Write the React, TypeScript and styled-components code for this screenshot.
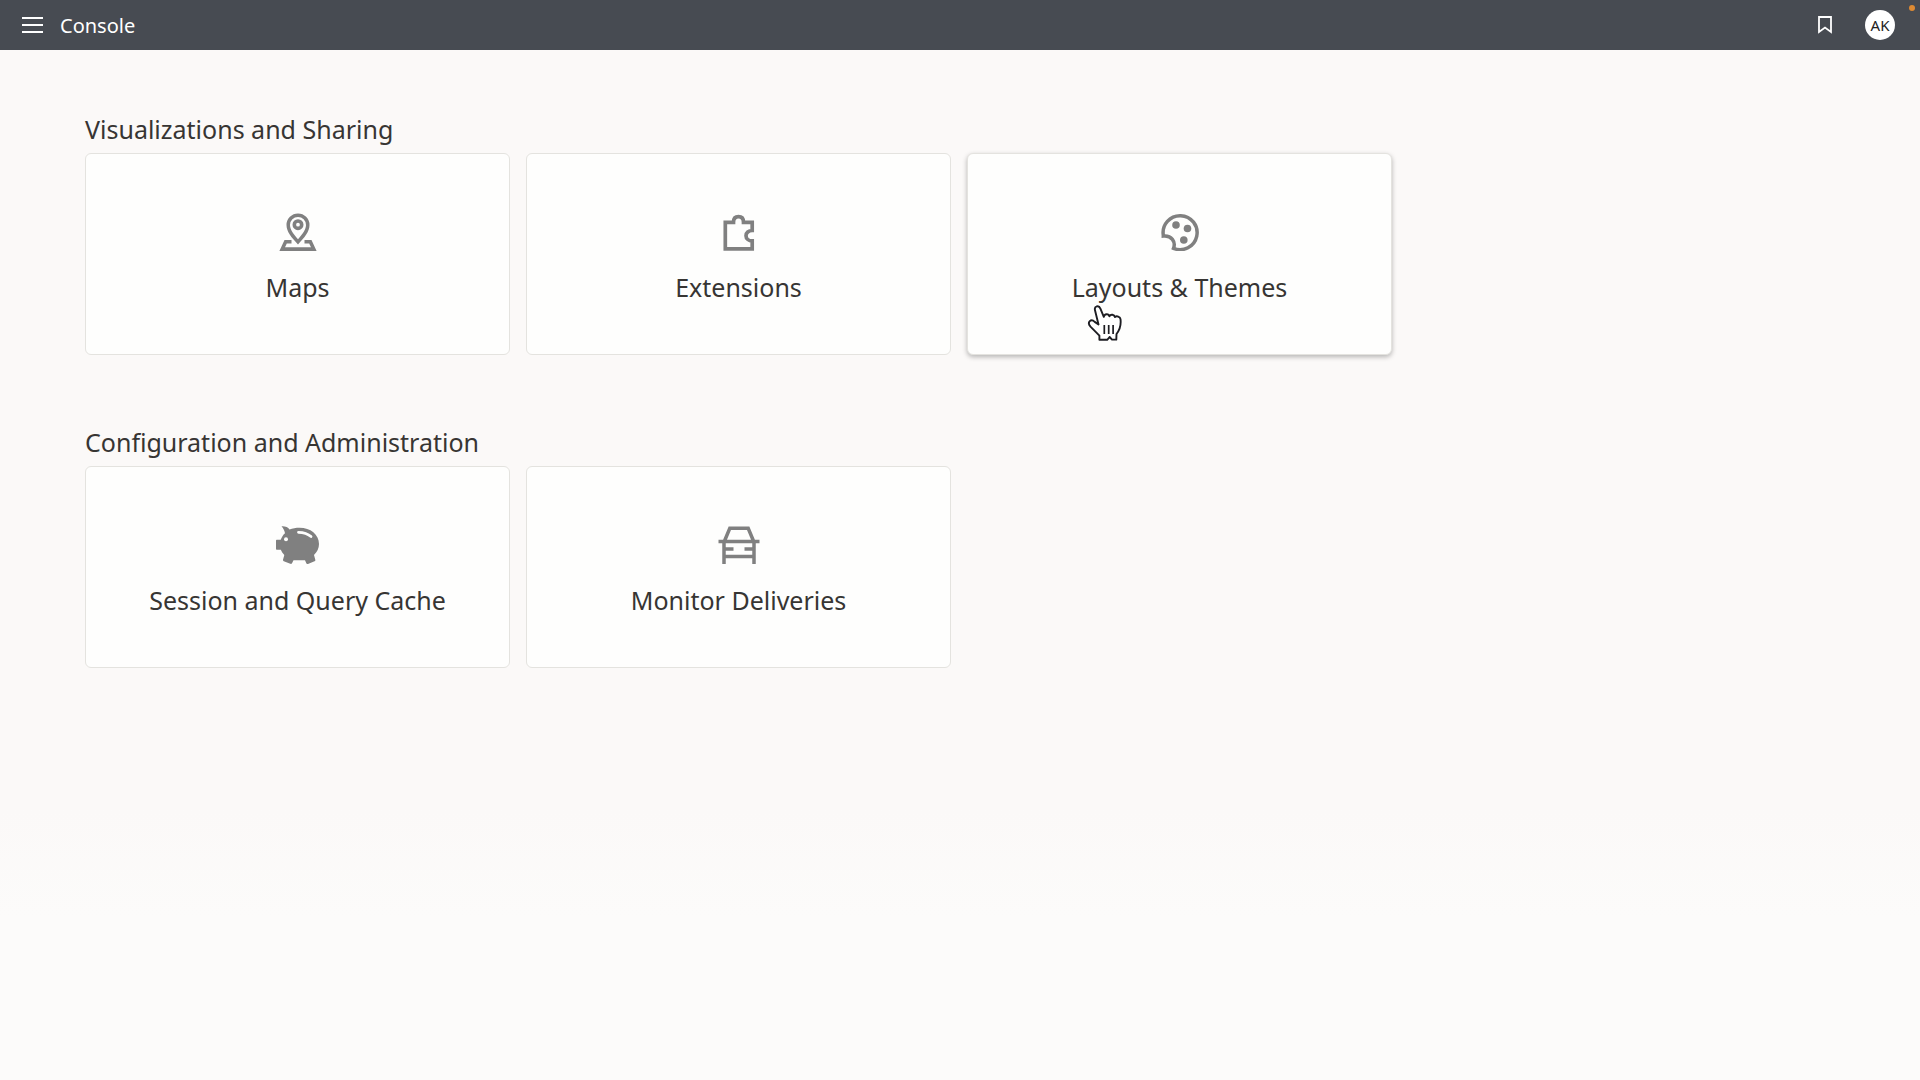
import React from "react";
import styled, { createGlobalStyle } from "styled-components";

const GlobalStyle = createGlobalStyle`
  * { box-sizing: border-box; }
  body {
    margin: 0;
    background: #fbf9f8;
    color: #373533;
    font-family: "Noto Sans", "Open Sans", sans-serif;
  }
`;

const Page = styled.div`
  min-height: 100vh;
  background: linear-gradient(#fbf9f8 75%, #fcfbfa 85%);
`;

const TopBar = styled.header`
  position: relative;
  display: flex;
  align-items: center;
  justify-content: space-between;
  height: 50px;
  padding: 0 25px 0 22px;
  background: #474b52;
  color: #ffffff;
`;

const BarGroup = styled.div<{ $gap: number }>`
  display: flex;
  align-items: center;
  gap: ${(p) => p.$gap}px;
`;

const BarTitle = styled.h1`
  margin: 0;
  padding-top: 2px;
  font-size: 20px;
  line-height: 28px;
  font-weight: 400;
`;

const IconButton = styled.button`
  display: flex;
  padding: 0;
  border: 0;
  background: none;
  color: inherit;
  cursor: pointer;
`;

const Avatar = styled.button`
  width: 30px;
  height: 30px;
  padding: 0;
  border: 0;
  border-radius: 50%;
  background: #ffffff;
  color: #222222;
  font-family: inherit;
  font-size: 15px;
  line-height: 30px;
  text-align: center;
`;

const StatusDot = styled.span`
  position: absolute;
  top: 5px;
  right: 5px;
  width: 6px;
  height: 6px;
  border-radius: 50%;
  background: #dd8a33;
`;

const Content = styled.main`
  display: flex;
  flex-direction: column;
  gap: 71px;
  padding: 63px 85px;
`;

const SectionTitle = styled.h2`
  margin: 0 0 8px;
  font-size: 25px;
  line-height: 32px;
  font-weight: 400;
`;

const CardRow = styled.div`
  display: flex;
  flex-wrap: wrap;
  gap: 16px;
`;

const Card = styled.button<{ $active?: boolean }>`
  position: relative;
  display: flex;
  flex-direction: column;
  align-items: center;
  justify-content: flex-start;
  gap: 20px;
  flex: 0 1 425px;
  height: 202px;
  padding: 59px 0 0;
  border: 1px solid #e4e3df;
  border-radius: 6px;
  background: #fefefd;
  color: inherit;
  font-family: inherit;
  cursor: pointer;
  box-shadow: ${(p) => (p.$active ? "0 2px 5px rgba(0, 0, 0, 0.28)" : "none")};
`;

const CardLabel = styled.span`
  font-size: 25px;
  line-height: 32px;
`;

const CardIcon = styled.svg`
  display: block;
  color: #808080;
`;

const Pointer = styled.svg`
  position: absolute;
  left: 119px;
  top: 150px;
`;

const MenuIcon = () => (
  <svg width="21" height="16" viewBox="0 0 21 16" aria-hidden="true">
    <path d="M0 1h21M0 8h21M0 15h21" stroke="#fff" strokeWidth="2" />
  </svg>
);

const BookmarkIcon = () => (
  <svg width="14" height="18" viewBox="0 0 14 18" aria-hidden="true">
    <path d="M1 1h12v15L7 11.5 1 16z" fill="none" stroke="#fff" strokeWidth="1.8" />
  </svg>
);

const MapsIcon = () => (
  <CardIcon width="38" height="38" viewBox="0 0 38 38" aria-hidden="true">
    <path
      fill="currentColor"
      fillRule="evenodd"
      d="M19 .5A11.500 11.500 0 0 0 7.500 12c0 6.500 4.800 12.300 11.500 19.500C25.700 24.300 30.500 18.500 30.500 12A11.500 11.500 0 0 0 19 .5zm0 3.400a8 8 0 0 1 8 8c0 4.300-3.200 8.800-8 14.300-4.800-5.500-8-10-8-14.300a8 8 0 0 1 8-8z"
    />
    <circle cx="19" cy="11.700" r="3.700" fill="none" stroke="currentColor" strokeWidth="3.600" />
    <path fill="currentColor" d="M5.500 27h7v3.500H7.800L6 34.300h26l-1.800-3.800h-4.700V27h7L37.600 38H.4z" />
  </CardIcon>
);

const ExtensionsIcon = () => (
  <CardIcon width="38" height="38" viewBox="0 0 38 38" aria-hidden="true">
    <path
      fill="none"
      stroke="currentColor"
      strokeWidth="3.700"
      d="M5.300 9.300h8.200C13.500 5.500 15.500 3.700 18.500 3.700s5 1.800 5 5.600h8.700v8.200c-3.600 0-6.200 2.200-6.200 5.200s2.600 5.200 6.200 5.200v7.900H5.300z"
    />
  </CardIcon>
);

const PaletteIcon = () => (
  <CardIcon width="38" height="38" viewBox="0 0 38 38" aria-hidden="true">
    <path
      fill="none"
      stroke="currentColor"
      strokeWidth="3.500"
      d="M2.300 22.200A17 17 0 1 1 12.500 35.300C15 29 10.500 22 2.300 23z"
    />
    <circle cx="15" cy="12" r="3.800" fill="currentColor" />
    <circle cx="26.500" cy="15.500" r="3.800" fill="currentColor" />
    <circle cx="22.800" cy="27" r="3.800" fill="currentColor" />
  </CardIcon>
);

const PiggyIcon = () => (
  <CardIcon width="43" height="38" viewBox="0 0 43 38" aria-hidden="true">
    <path
      fill="currentColor"
      d="M5.500.3C9 0 12 1.300 13.500 3.400 16.500 2.300 20 1.800 23.500 1.800 34.500 1.800 43 8.500 43 18c0 4.300-1.800 8-5 11l1.300 4.800c.2.700-.2 1.200-.8 1.500l-6.500 2.600c-.8.300-1.400 0-1.700-.7L29 34.300H17.500L16 37.200c-.4.800-1 .9-1.700.6l-6.500-2.600c-.6-.3-1-.8-.8-1.500L8.300 29C6.700 27.300 5.600 25.600 4.800 23.800H1c-.6 0-1-.4-1-1v-8c0-.6.4-1 1-1h3.700C5.700 11 7 8.900 9 7.200 8.500 4.500 7.200 2.300 5.500.3z"
    />
    <circle cx="10" cy="13.300" r="2" fill="#fefefd" />
    <path d="M22.500 6.300c5.500 0 9.500 1.500 12.500 4.300" fill="none" stroke="#fefefd" strokeWidth="2.800" strokeLinecap="round" />
  </CardIcon>
);

const CarIcon = () => (
  <CardIcon width="42" height="38" viewBox="0 0 42 38" aria-hidden="true">
    <path
      fill="none"
      stroke="currentColor"
      strokeWidth="3.500"
      d="M.5 15.500h41M6.500 15l5.300-12.700h18.400l5.300 12.700M6 15v23M36 15v23M6 30.500h30M6 23h9.500M36 23h-9.500"
    />
  </CardIcon>
);

const HandPointer = () => (
  <Pointer width="36" height="38" viewBox="0 0 36 38" aria-hidden="true">
    <path
      d="M11.500 20.500 8 6.200C7 2.200 11.800.6 13.400 4.600l3.400 8.200c.6-3.400 4.900-3.400 5.600-.5 1.300-2.400 4.900-1.900 5.500.8 1.700-1.600 5.300-.5 5.600 2.100.7 5.800-1.200 11.400-4 14.800l-.2 5.600h-4.300l-2.400-2.600-2.400 2.800h-7.800v-4.200L3.500 22.700c-4-4.800.7-8.400 4.200-4.800z"
      fill="#fff"
      stroke="#1d1d22"
      strokeWidth="1.900"
      strokeLinejoin="round"
    />
    <path d="M17.300 21v9M21.700 21v9M26.100 21v9" stroke="#1d1d22" strokeWidth="1.700" />
  </Pointer>
);

type CardItem = { label: string; Icon: () => React.JSX.Element; active?: boolean };

const sections: { title: string; cards: CardItem[] }[] = [
  {
    title: "Visualizations and Sharing",
    cards: [
      { label: "Maps", Icon: MapsIcon },
      { label: "Extensions", Icon: ExtensionsIcon },
      { label: "Layouts & Themes", Icon: PaletteIcon, active: true },
    ],
  },
  {
    title: "Configuration and Administration",
    cards: [
      { label: "Session and Query Cache", Icon: PiggyIcon },
      { label: "Monitor Deliveries", Icon: CarIcon },
    ],
  },
];

export default function App() {
  return (
    <Page>
      <GlobalStyle />
      <TopBar>
        <BarGroup $gap={17}>
          <IconButton aria-label="Menu">
            <MenuIcon />
          </IconButton>
          <BarTitle>Console</BarTitle>
        </BarGroup>
        <BarGroup $gap={33}>
          <IconButton aria-label="Bookmark">
            <BookmarkIcon />
          </IconButton>
          <Avatar>AK</Avatar>
        </BarGroup>
        <StatusDot />
      </TopBar>
      <Content>
        {sections.map(({ title, cards }) => (
          <section key={title}>
            <SectionTitle>{title}</SectionTitle>
            <CardRow>
              {cards.map(({ label, Icon, active }) => (
                <Card key={label} $active={active}>
                  <Icon />
                  <CardLabel>{label}</CardLabel>
                  {active && <HandPointer />}
                </Card>
              ))}
            </CardRow>
          </section>
        ))}
      </Content>
    </Page>
  );
}
